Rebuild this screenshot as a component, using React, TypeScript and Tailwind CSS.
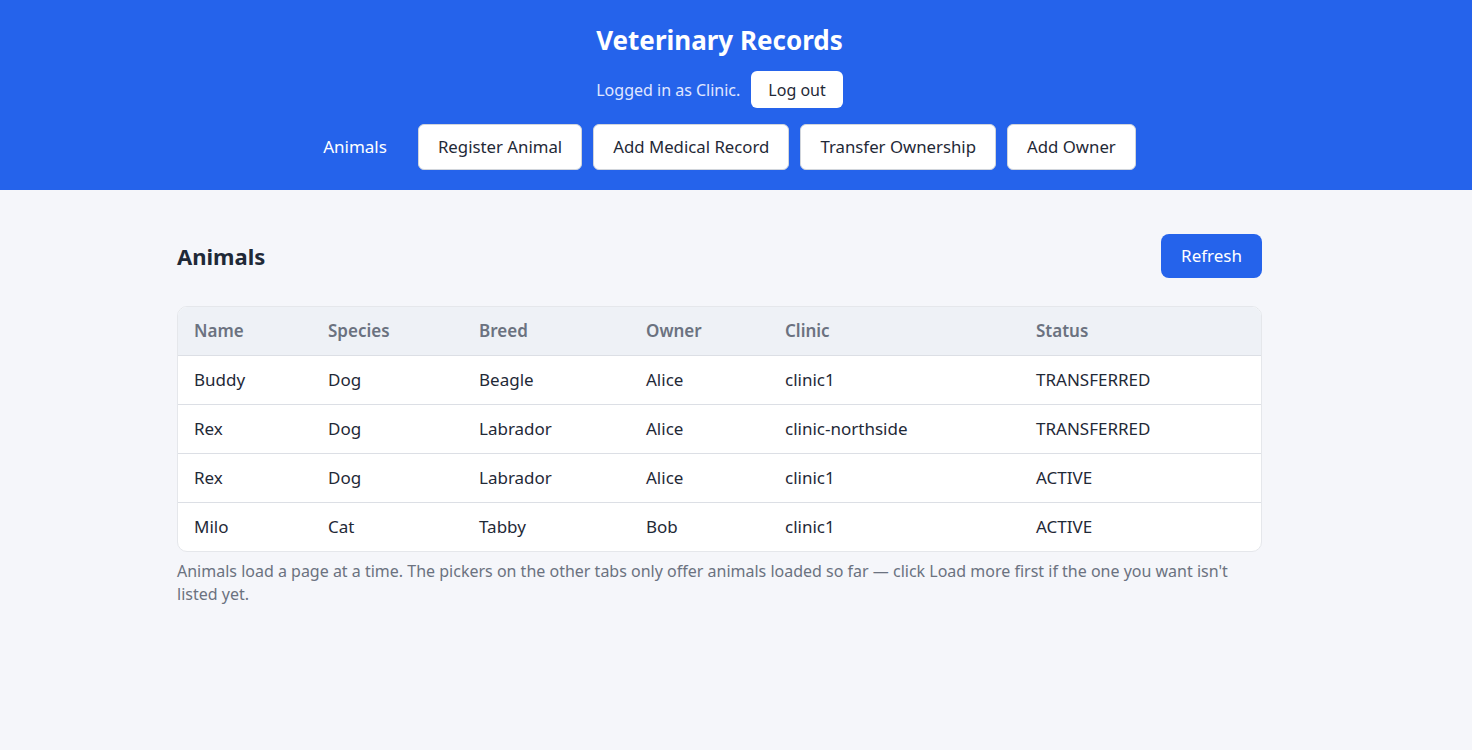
import React from "react";

const rows = [
  ["Buddy", "Dog", "Beagle", "Alice", "clinic1", "TRANSFERRED"],
  ["Rex", "Dog", "Labrador", "Alice", "clinic-northside", "TRANSFERRED"],
  ["Rex", "Dog", "Labrador", "Alice", "clinic1", "ACTIVE"],
  ["Milo", "Cat", "Tabby", "Bob", "clinic1", "ACTIVE"],
];

const cols = [
  { label: "Name", w: "w-[134px]" },
  { label: "Species", w: "w-[151px]" },
  { label: "Breed", w: "w-[167px]" },
  { label: "Owner", w: "w-[139px]" },
  { label: "Clinic", w: "w-[251px]" },
  { label: "Status", w: "" },
];

export default function App() {
  return (
    <div className="min-h-[750px] bg-[#f5f6fa] font-['Segoe_UI','Noto_Sans',sans-serif] text-[#1f2937]">
      <header className="bg-[#2563eb] pr-[33px] pt-[22px] pb-[20px] text-white">
        <div className="flex flex-col items-center">
          <h1 className="text-[26px] font-bold leading-[36px]">Veterinary Records</h1>
          <div className="mt-[13px] flex items-center gap-[11px]">
            <span className="text-[16px] text-[#e0e7ff]">Logged in as Clinic.</span>
            <button className="h-[37px] rounded-md bg-white px-[17px] text-[16px] text-[#1f2937]">Log out</button>
          </div>
          <nav className="mt-[16px] flex items-center gap-[11px]">
            <button className="h-[46px] px-[20px] text-[17px] text-white">Animals</button>
            {["Register Animal", "Add Medical Record", "Transfer Ownership", "Add Owner"].map((t) => (
              <button
                key={t}
                className="h-[46px] rounded-md border border-[#d1d5db] bg-white px-[19px] text-[16.8px] text-[#1f2937]"
              >
                {t}
              </button>
            ))}
          </nav>
        </div>
      </header>
      <main className="pr-[33px]">
        <div className="mx-auto w-[1085px] pt-[44px]">
          <div className="flex items-center justify-between">
            <h2 className="text-[22px] font-bold text-[#1f2937]">Animals</h2>
            <button className="h-[44px] rounded-lg bg-[#2563eb] px-[20px] text-[17px] text-white">Refresh</button>
          </div>
          <div className="mt-[28px] overflow-hidden rounded-[10px] border border-[#e5e7eb] bg-white">
            <table className="w-full border-collapse text-left text-[17px]">
              <thead>
                <tr className="h-[48px] bg-[#eef1f6]">
                  {cols.map((c) => (
                    <th key={c.label} className={`${c.w} px-[16px] font-semibold text-[#6b7280]`}>
                      {c.label}
                    </th>
                  ))}
                </tr>
              </thead>
              <tbody>
                {rows.map((r, i) => (
                  <tr key={i} className="h-[49px] border-t border-[#dcdfe5]">
                    {r.map((v, j) => (
                      <td key={j} className="px-[16px] text-[#1f2937]">
                        {v}
                      </td>
                    ))}
                  </tr>
                ))}
              </tbody>
            </table>
          </div>
          <p className="mt-[8px] text-[16px] leading-[23px] text-[#6b7280]">
            Animals load a page at a time. The pickers on the other tabs only offer animals loaded so far — click Load more first if the one you want isn't listed yet.
          </p>
        </div>
      </main>
    </div>
  );
}
